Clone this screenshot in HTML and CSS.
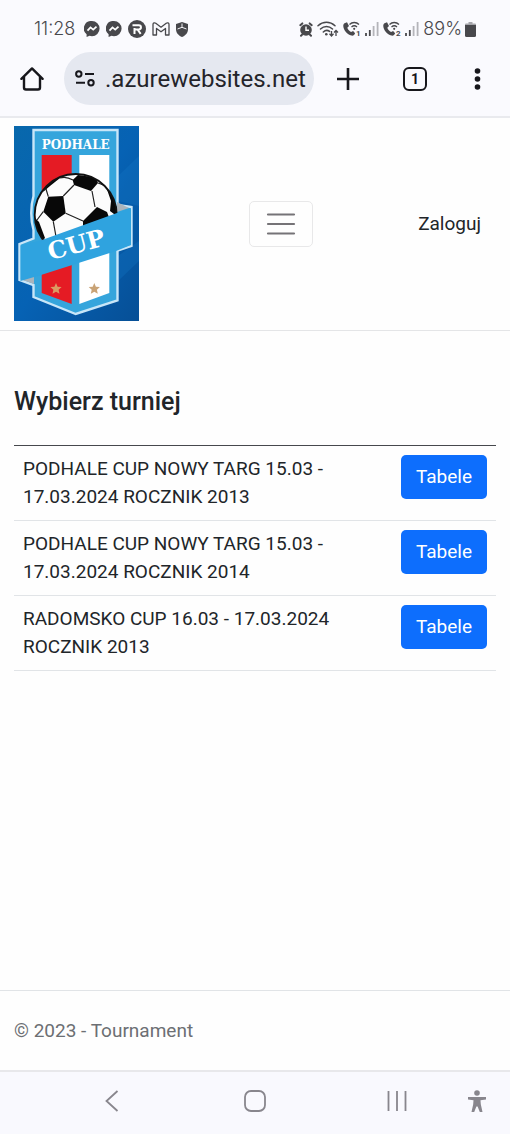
FILE: index.html
```html
<!DOCTYPE html>
<html lang="pl">
<head>
  <meta charset="UTF-8">
  <meta name="viewport" content="width=device-width, initial-scale=1.0">
  <title>Tournament</title>
  <link rel="stylesheet" href="styles.css">
</head>
<body>

  <div class="status-bar">
    <div class="status-left">
      <span class="clock">11:28</span>
      <svg width="16" height="16" viewBox="0 0 16 16"><path fill="#48484c" d="M8 0a7.6 7.6 0 0 1 0 15.200c-.9 0-1.700-.1-2.500-.4L2.600 16v-2.700A7.500 7.500 0 0 1 8 0z"/><path fill="none" stroke="#fff" stroke-width="1.800" d="M3.500 9.600l3-3.200 2.700 2.200 3.300-3"/></svg>
      <svg width="16" height="16" viewBox="0 0 16 16"><path fill="#48484c" d="M8 0a7.6 7.6 0 0 1 0 15.200c-.9 0-1.700-.1-2.500-.4L2.600 16v-2.700A7.500 7.500 0 0 1 8 0z"/><path fill="none" stroke="#fff" stroke-width="1.800" d="M3.500 9.600l3-3.200 2.700 2.200 3.300-3"/></svg>
      <svg width="18" height="18" viewBox="0 0 18 18"><circle cx="9" cy="9" r="9" fill="#48484c"/><path fill="none" stroke="#fff" stroke-width="2" d="M4.500 5.200h6.300a2 2 0 0 1 0 4.300H5.500M6.500 8v6M9.500 9.500l3.200 4.300"/></svg>
      <svg width="18" height="14" viewBox="0 0 18 14"><path fill="none" stroke="#48484c" stroke-width="1.300" stroke-linejoin="round" d="M1 13V2.500C1 .8 2.600.4 3.800 1.300L9 5.200l5.200-3.900C15.400.4 17 .8 17 2.500V13h-3.500V6.400L9 9.800 4.500 6.400V13z"/></svg>
      <svg width="12" height="15" viewBox="0 0 12 15"><path fill="#48484c" d="M6 0l6 2v5c0 4-2.500 6.500-6 8-3.500-1.500-6-4-6-8V2z"/><path fill="none" stroke="#f4f4f8" stroke-width="1" d="M6 1.500v3.800M6 5.300L1.500 7M6 5.300L10.500 7"/></svg>
    </div>
    <div class="status-right">
      <svg width="14" height="15" viewBox="0 0 14 15"><circle cx="7" cy="8" r="5.800" fill="#48484c"/><path fill="none" stroke="#48484c" stroke-width="2" stroke-linecap="round" d="M1.300 3.200l2-1.800M12.700 3.200l-2-1.800M3 12.800l-1 1M11 12.800l1 1"/><path fill="none" stroke="#fff" stroke-width="1.400" d="M7 4.500V8.300h3"/></svg>
      <svg width="22" height="16" viewBox="0 0 22 16"><path fill="none" stroke="#48484c" stroke-width="1.500" stroke-linecap="round" d="M1 4.800c5-4.600 12-4.600 17 0M3.500 8c3.500-3.400 8.500-3.400 12 0M6.300 11c2-1.900 4.500-1.900 6.300-.6"/><circle cx="9.300" cy="13.200" r="1.300" fill="#48484c"/><path fill="none" stroke="#48484c" stroke-width="1.300" d="M14.500 10v5M12.500 12.800l2 2.200 2-2.200M19 15V9.500M17 11.500l2-2 2 2"/></svg>
      <svg width="18" height="16" viewBox="0 0 18 16"><path fill="#48484c" d="M1.500 2.200L4 1.200l2 3.700-1.700 1.800c.8 2 2 3.300 3.800 4.400l2-1.200 2 2.400c-.7 1.700-1.800 2.700-3.800 2.200C4.300 13.500.6 9.300.3 5.200c-.1-1.300.3-2.400 1.200-3z"/><path fill="none" stroke="#48484c" stroke-width="1.300" d="M6.500 3.500c2.700-2.700 6.800-2.700 9.500 0M8.500 6c1.700-1.500 3.800-1.500 5.500 0"/><circle cx="11.200" cy="7.800" r="1.100" fill="#48484c"/><text x="13" y="15" class="sim">1</text></svg>
      <svg width="14" height="14" viewBox="0 0 14 14"><path stroke="#48484c" stroke-width="1.800" d="M1 14v-3M4.800 14V8"/><path stroke="#b4b4b9" stroke-width="1.800" d="M8.600 14V4M12.600 14V0"/></svg>
      <svg width="18" height="16" viewBox="0 0 18 16"><path fill="#48484c" d="M1.500 2.200L4 1.200l2 3.700-1.700 1.800c.8 2 2 3.300 3.800 4.400l2-1.200 2 2.400c-.7 1.700-1.800 2.700-3.800 2.200C4.300 13.500.6 9.300.3 5.200c-.1-1.300.3-2.400 1.200-3z"/><path fill="none" stroke="#48484c" stroke-width="1.300" d="M6.500 3.500c2.700-2.700 6.800-2.700 9.500 0M8.500 6c1.700-1.500 3.800-1.500 5.500 0"/><circle cx="11.200" cy="7.800" r="1.100" fill="#48484c"/><text x="13" y="15" class="sim">2</text></svg>
      <svg width="14" height="14" viewBox="0 0 14 14"><path stroke="#48484c" stroke-width="1.800" d="M1 14v-3M4.800 14V8"/><path stroke="#b4b4b9" stroke-width="1.800" d="M8.600 14V4M12.600 14V0"/></svg>
      <span class="battery">89%
        <svg width="11" height="15" viewBox="0 0 11 15"><path fill="#a5a5aa" d="M3.500 0h4v1.500H10a1 1 0 0 1 1 1V5H0V2.500a1 1 0 0 1 1-1h2.500z"/><path fill="#48484c" d="M0 3h11v10.500a1.500 1.500 0 0 1-1.500 1.500h-8A1.500 1.500 0 0 1 0 13.500z"/></svg>
      </span>
    </div>
  </div>

  <div class="toolbar">
    <button class="icon-btn" aria-label="Home">
      <svg width="24" height="24" viewBox="0 0 24 24"><path fill="none" stroke="#17171c" stroke-width="2.400" stroke-linejoin="round" stroke-linecap="round" d="M1.400 11.800L12 1.400l10.600 10.400M4 9.800V20.500a2 2 0 0 0 2 2h12a2 2 0 0 0 2-2V9.800"/></svg>
    </button>
    <label class="address">
      <svg width="20" height="17" viewBox="0 0 20 17"><g fill="none" stroke="#17171c" stroke-width="2"><circle cx="3.800" cy="4" r="2.700"/><circle cx="16" cy="12.800" r="2.700"/><path d="M10 4h9M1 12.800h9"/></g></svg>
      <input class="url" type="text" aria-label="Address" value=".azurewebsites.net">
    </label>
    <button class="icon-btn plus" aria-label="New tab">
      <svg width="22" height="22" viewBox="0 0 22 22"><path stroke="#17171c" stroke-width="2.600" d="M11 0v22M0 11h22"/></svg>
    </button>
    <button class="icon-btn tabs" aria-label="Tabs">1</button>
    <button class="icon-btn" aria-label="Menu">
      <svg width="7" height="22" viewBox="0 0 7 22"><g fill="#17171c"><circle cx="3.500" cy="3" r="2.800"/><circle cx="3.500" cy="11" r="2.800"/><circle cx="3.500" cy="19" r="2.800"/></g></svg>
    </button>
  </div>

  <header class="navbar">
    <a class="brand" href="#" aria-label="Podhale Cup">
      <svg width="125" height="195" viewBox="0 0 125 195">
        <defs>
          <linearGradient id="sky" x1="0" y1="0" x2="1" y2="1">
            <stop offset="0" stop-color="#0868ac"/>
            <stop offset=".5" stop-color="#0662b4"/>
            <stop offset="1" stop-color="#064f96"/>
          </linearGradient>
          <clipPath id="ball"><circle cx="61.700" cy="89" r="41"/></clipPath>
        </defs>
        <rect width="125" height="195" fill="url(#sky)"/>
        <path fill="#1378c8" opacity=".3" d="M104 50l21-20v50l-21-5zM104 130l21-15v20l-21 20z"/>
        <!-- shield -->
        <path fill="#35a5dc" stroke="#c8e6f8" stroke-width="2.400" d="M19.500 4h84v75l14 2v39l-14 4.500v50L61.700 188l-42.200-17v-12L5.500 154v-36l14-5.500V104c-3-10-3-24 0-34z"/>
        <path fill="#aab4bc" d="M103 76l12 6-12 4zM6 153l14-3v8z"/>
        <path fill="#e51b24" d="M27.700 29h30v149l-30-11z"/>
        <path fill="#fff" d="M65.300 29h30v138l-30 11z"/>
        <text x="61.700" y="22.500" class="logo-top">PODHALE</text>
        <!-- ball -->
        <g clip-path="url(#ball)">
          <circle cx="61.700" cy="89" r="41" fill="#fcfcfc"/>
          <g fill="#080808">
            <path d="M58.700 54L64 49l18 2.500L84 57l-7 8-17-6z"/>
            <path d="M34.300 70.700L49.300 70l2.400 17.300-12.400 8.400-10-10z"/>
            <path d="M69 95l14-14 10 5 3 8-27 12z"/>
            <path d="M90 55l14 14v22l-8-6 1-10z"/>
            <path d="M19 90l6 6 6 16-6 6z"/>
            <path d="M29 66l6-10 8-6 3 2-10 8z"/>
          </g>
          <path fill="none" stroke="#222" stroke-width="1.200" d="M49.300 70L60 59M78 65l3 16M51.700 87.300L69 95M39.300 95.700L43 116M29.300 85.700L23 94M34.300 70.700L32 63M84 57l8 3M46 52q6-2 13 2"/>
        </g>
        <circle cx="61.700" cy="89" r="41" fill="none" stroke="#111" stroke-width="1.800"/>
        <!-- ribbon -->
        <path fill="#2fa3df" d="M6.500 119.500L28 114l75-27 14-5v37l-15 6-75 24-20.500 6z"/>
        <text x="62" y="127" class="logo-cup" transform="rotate(-15 62 118)">CUP</text>
        <path fill="#dc9a62" d="M42 157l1.600 3.700 4 .4-3 2.700.9 4-3.500-2.100-3.500 2.100.9-4-3-2.700 4-.4z"/>
        <path fill="#c9a376" d="M80.300 157l1.600 3.700 4 .4-3 2.700.9 4-3.500-2.100-3.500 2.100.9-4-3-2.700 4-.4z"/>
      </svg>
    </a>
    <button class="toggler" aria-label="Menu">
      <svg width="34" height="34" viewBox="0 0 34 34"><path stroke="#757377" stroke-width="2.200" stroke-linecap="round" d="M4 7.500h26M4 17h26M4 26.500h26"/></svg>
    </button>
    <a class="nav-link" href="#">Zaloguj</a>
  </header>

  <main class="content">
    <h1>Wybierz turniej</h1>
    <table class="table">
      <tbody>
        <tr>
          <td>PODHALE CUP NOWY TARG 15.03 - 17.03.2024 ROCZNIK 2013</td>
          <td class="action"><a class="btn" href="#">Tabele</a></td>
        </tr>
        <tr>
          <td>PODHALE CUP NOWY TARG 15.03 - 17.03.2024 ROCZNIK 2014</td>
          <td class="action"><a class="btn" href="#">Tabele</a></td>
        </tr>
        <tr>
          <td>RADOMSKO CUP 16.03 - 17.03.2024 ROCZNIK 2013</td>
          <td class="action"><a class="btn" href="#">Tabele</a></td>
        </tr>
      </tbody>
    </table>
  </main>

  <footer class="footer">&copy; 2023 - Tournament</footer>

  <nav class="system-nav">
    <div class="nav-keys">
      <button class="icon-btn" aria-label="Back">
        <svg width="20" height="22" viewBox="0 0 20 22"><path fill="none" stroke="#88868d" stroke-width="1.800" d="M15.500 1L4.500 11l11 10"/></svg>
      </button>
      <button class="icon-btn" aria-label="Home screen">
        <svg width="22" height="22" viewBox="0 0 22 22"><rect x="1" y="1" width="20" height="20" rx="6" fill="none" stroke="#88868d" stroke-width="1.800"/></svg>
      </button>
      <button class="icon-btn" aria-label="Recent apps">
        <svg width="20" height="20" viewBox="0 0 20 20"><path stroke="#88868d" stroke-width="1.800" d="M1.500 0v20M10 0v20M18.500 0v20"/></svg>
      </button>
    </div>
    <button class="icon-btn" aria-label="Accessibility">
      <svg width="18" height="23" viewBox="0 0 18 23"><g fill="#88868d"><circle cx="9" cy="3" r="2.800"/><path d="M0 7h18v2.400l-5.500.8.3 4L14.500 22h-2.700L9.600 16.500H8.400L6.200 22H3.500l1.700-7.800.3-4L0 9.400z"/></g></svg>
    </button>
  </nav>

</body>
</html>
```

FILE: styles.css
```css
* {
  margin: 0;
  padding: 0;
  box-sizing: border-box;
}

body {
  display: flex;
  flex-direction: column;
  min-height: 100vh;
  background: #fefefe;
  color: #212529;
  font-family: Roboto, sans-serif;
  font-size: 19px;
  line-height: 28px;
}

svg {
  display: block;
  flex-shrink: 0;
}

a {
  color: inherit;
  text-decoration: none;
}

button {
  font-family: inherit;
  cursor: pointer;
}

/* status bar */
.status-bar {
  display: flex;
  justify-content: space-between;
  height: 52px;
  padding: 6px 34px 0;
  background: #fafafe;
  color: #48484c;
  font-family: Inter, sans-serif;
  font-size: 18px;
  font-weight: 300;
}

.status-left,
.status-right,
.battery {
  display: flex;
  align-items: center;
}

.status-left {
  gap: 6px;
}

.clock {
  margin-right: 3px;
}

.status-right {
  gap: 4px;
}

.battery {
  gap: 3px;
}

.sim {
  font: 700 8px Roboto, sans-serif;
  fill: #48484c;
}

/* browser toolbar */
.toolbar {
  display: flex;
  align-items: center;
  padding: 0 29px 11px 20px;
  background: #fafafe;
  border-bottom: 2px solid #e9eaee;
}

.icon-btn {
  display: flex;
  align-items: center;
  justify-content: center;
  background: none;
  border: none;
}

.address {
  display: flex;
  align-items: center;
  flex: 1;
  gap: 10px;
  min-width: 0;
  height: 53px;
  margin: 0 23px 0 20px;
  padding: 0 8px 0 11px;
  background: #e5e8f0;
  border-radius: 27px;
}

.url {
  flex: 1;
  min-width: 0;
  background: none;
  border: none;
  outline: none;
  color: #24242a;
  font-family: inherit;
  font-size: 24px;
}

.plus {
  margin-right: 44px;
}

.tabs {
  width: 24px;
  height: 24px;
  margin-right: 47px;
  border: 2px solid #17171c;
  border-radius: 6px;
  color: #17171c;
  font-size: 14px;
  font-weight: 700;
}

/* page header */
.navbar {
  display: flex;
  align-items: center;
  justify-content: space-between;
  padding: 8px 29px 9px 14px;
  border-bottom: 1px solid #e4e5e7;
}

.brand {
  margin-right: 4px;
}

.logo-top,
.logo-cup {
  font-family: "DejaVu Serif", serif;
  font-weight: 700;
  text-anchor: middle;
  fill: #fff;
}

.logo-top {
  font-size: 12px;
}

.logo-cup {
  font-size: 24px;
}

.toggler {
  padding: 5px 14px;
  background: none;
  border: 1px solid #e8e8e9;
  border-radius: 5px;
}

/* tournaments */
.content {
  flex: 1;
  padding: 56px 14px;
}

h1 {
  margin-bottom: 28px;
  font-size: 25px;
  font-weight: 500;
  line-height: 30px;
}

.table {
  width: 100%;
  border-collapse: collapse;
  border-top: 1px solid #46484d;
}

.table td {
  padding: 9px;
  border-bottom: 1px solid #e1e4e7;
  vertical-align: top;
}

.table .action {
  width: 1px;
  padding-left: 60px;
}

.btn {
  display: block;
  padding: 8px 15px;
  background: #0d6efd;
  border-radius: 5px;
  color: #fff;
}

/* footer */
.footer {
  padding: 26px 14px 25px;
  border-top: 1px solid #e1e4e7;
  color: #6c6f73;
}

/* system navigation */
.system-nav {
  display: flex;
  align-items: center;
  gap: 61px;
  height: 64px;
  padding: 0 24px 4px 102px;
  background: #f9f9fe;
  border-top: 2px solid #e8e8eb;
}

.nav-keys {
  display: flex;
  align-items: center;
  justify-content: space-between;
  flex: 1;
}
```
